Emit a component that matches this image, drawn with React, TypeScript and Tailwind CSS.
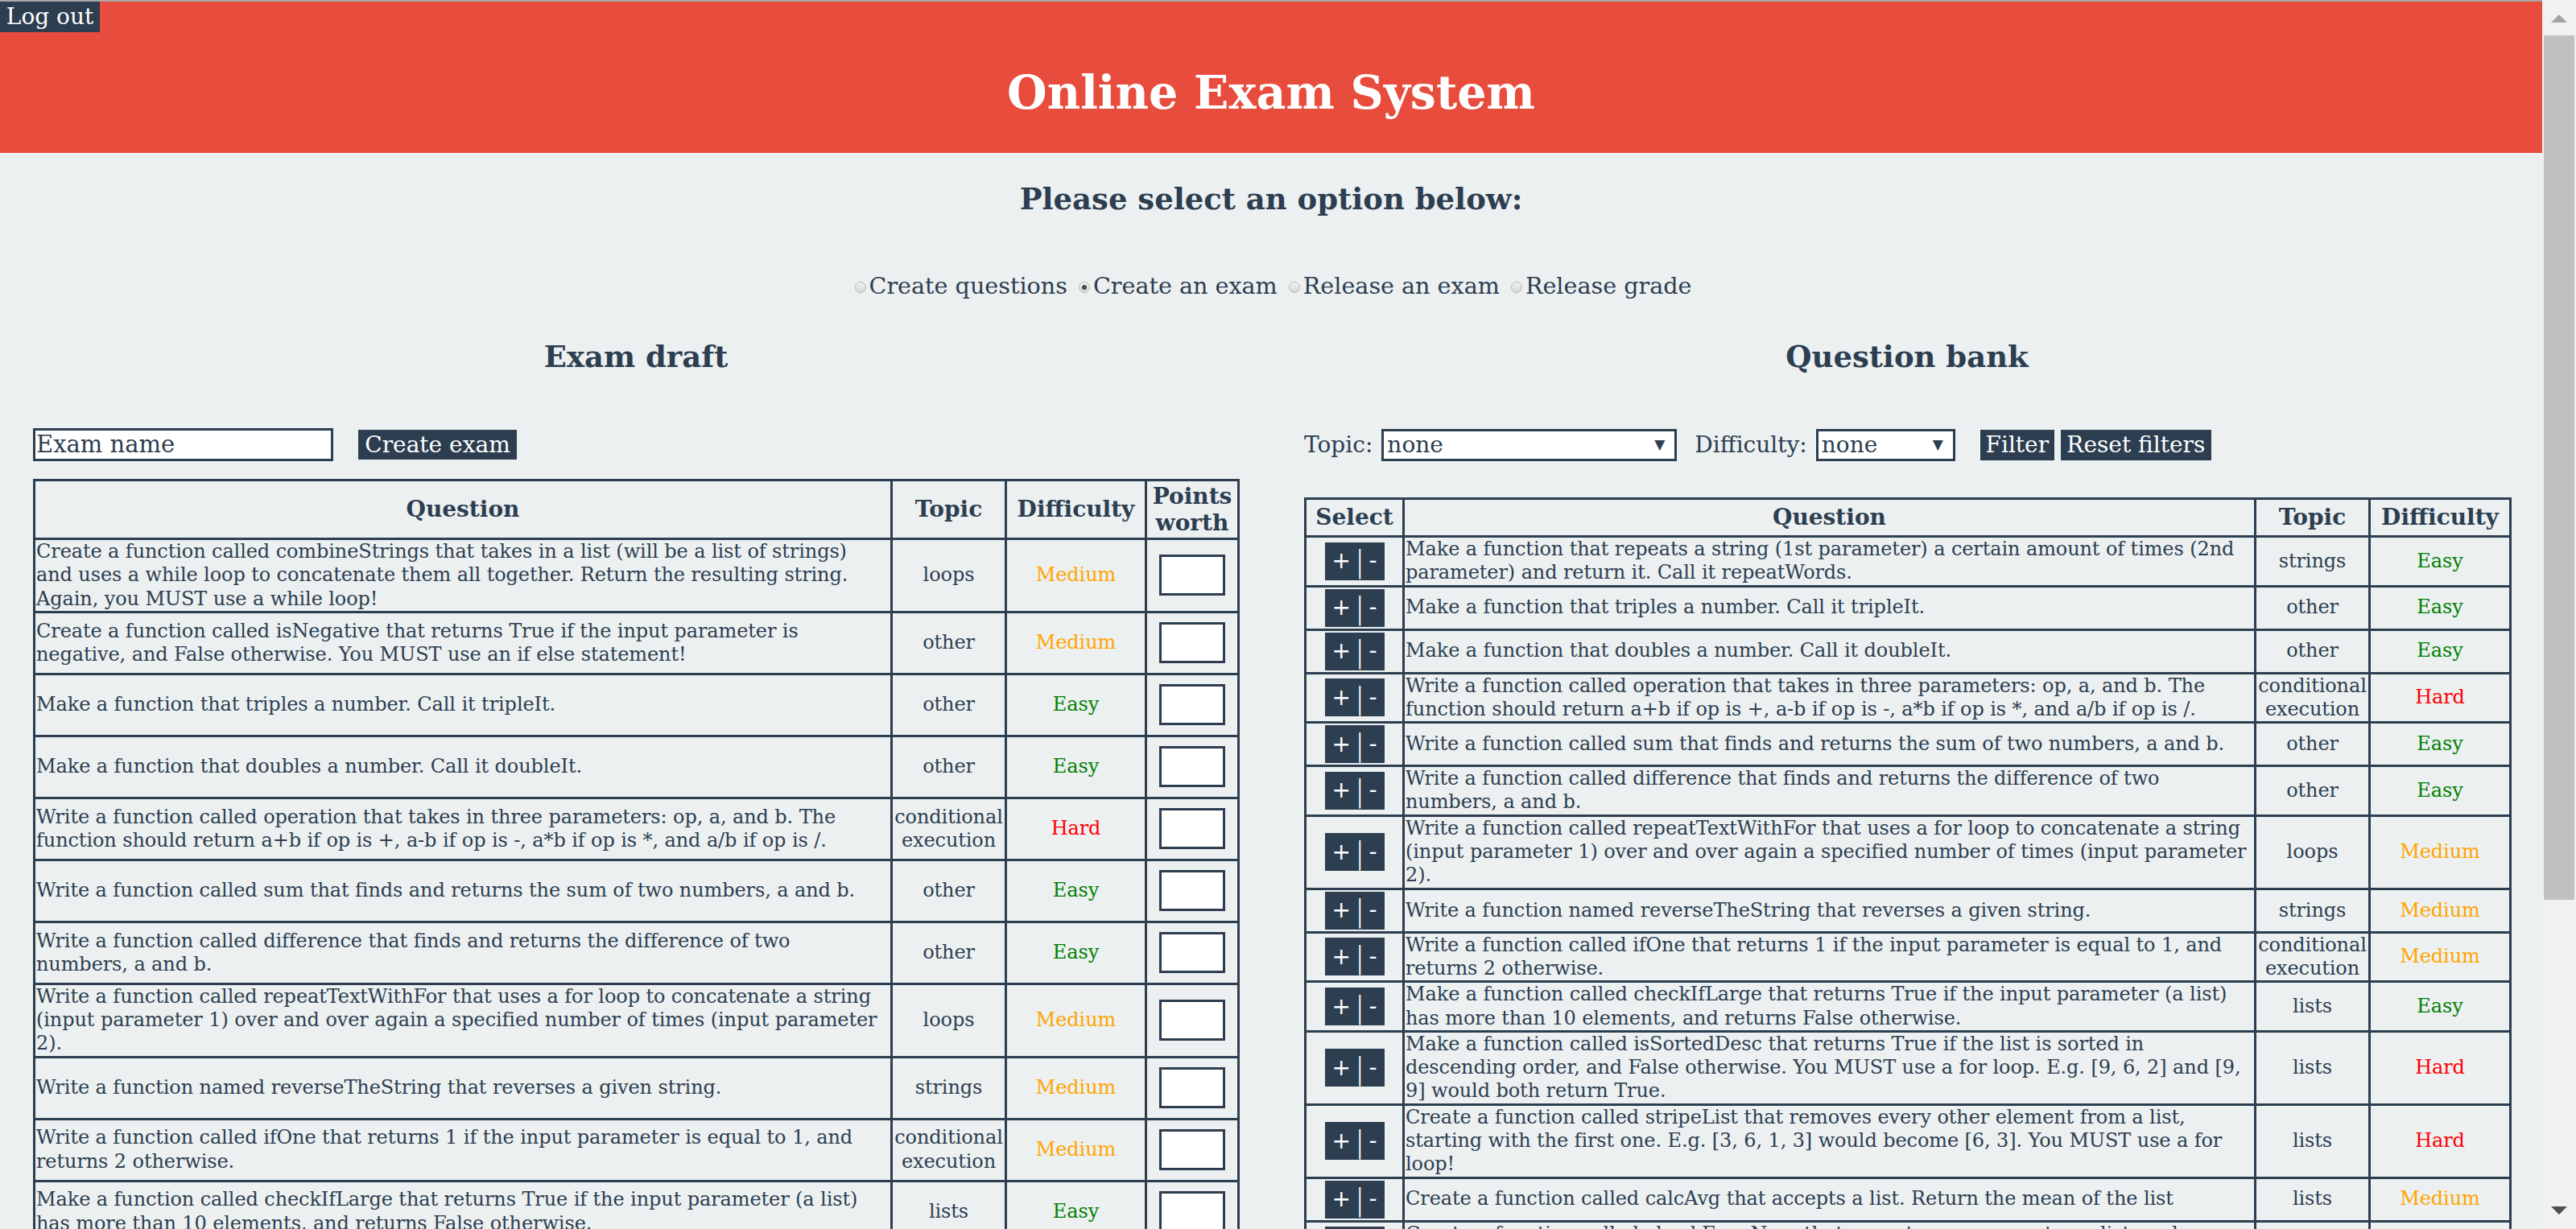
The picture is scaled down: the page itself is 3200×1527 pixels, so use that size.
import React from "react";

type Row = { q: string; t: string; d: "Easy" | "Medium" | "Hard" };

const draft: Row[] = [
  { q: "Create a function called combineStrings that takes in a list (will be a list of strings) and uses a while loop to concatenate them all together. Return the resulting string. Again, you MUST use a while loop!", t: "loops", d: "Medium" },
  { q: "Create a function called isNegative that returns True if the input parameter is negative, and False otherwise. You MUST use an if else statement!", t: "other", d: "Medium" },
  { q: "Make a function that triples a number. Call it tripleIt.", t: "other", d: "Easy" },
  { q: "Make a function that doubles a number. Call it doubleIt.", t: "other", d: "Easy" },
  { q: "Write a function called operation that takes in three parameters: op, a, and b. The function should return a+b if op is +, a-b if op is -, a*b if op is *, and a/b if op is /.", t: "conditional execution", d: "Hard" },
  { q: "Write a function called sum that finds and returns the sum of two numbers, a and b.", t: "other", d: "Easy" },
  { q: "Write a function called difference that finds and returns the difference of two numbers, a and b.", t: "other", d: "Easy" },
  { q: "Write a function called repeatTextWithFor that uses a for loop to concatenate a string (input parameter 1) over and over again a specified number of times (input parameter 2).", t: "loops", d: "Medium" },
  { q: "Write a function named reverseTheString that reverses a given string.", t: "strings", d: "Medium" },
  { q: "Write a function called ifOne that returns 1 if the input parameter is equal to 1, and returns 2 otherwise.", t: "conditional execution", d: "Medium" },
  { q: "Make a function called checkIfLarge that returns True if the input parameter (a list) has more than 10 elements, and returns False otherwise.", t: "lists", d: "Easy" },
  { q: "Make a function called isSortedDesc that returns True if the list is sorted in descending order, and False otherwise. You MUST use a for loop. E.g. [9, 6, 2] and [9, 9] would both return True.", t: "lists", d: "Hard" },
];

const bank: Row[] = [
  { q: "Make a function that repeats a string (1st parameter) a certain amount of times (2nd parameter) and return it. Call it repeatWords.", t: "strings", d: "Easy" },
  { q: "Make a function that triples a number. Call it tripleIt.", t: "other", d: "Easy" },
  { q: "Make a function that doubles a number. Call it doubleIt.", t: "other", d: "Easy" },
  { q: "Write a function called operation that takes in three parameters: op, a, and b. The function should return a+b if op is +, a-b if op is -, a*b if op is *, and a/b if op is /.", t: "conditional execution", d: "Hard" },
  { q: "Write a function called sum that finds and returns the sum of two numbers, a and b.", t: "other", d: "Easy" },
  { q: "Write a function called difference that finds and returns the difference of two numbers, a and b.", t: "other", d: "Easy" },
  { q: "Write a function called repeatTextWithFor that uses a for loop to concatenate a string (input parameter 1) over and over again a specified number of times (input parameter 2).", t: "loops", d: "Medium" },
  { q: "Write a function named reverseTheString that reverses a given string.", t: "strings", d: "Medium" },
  { q: "Write a function called ifOne that returns 1 if the input parameter is equal to 1, and returns 2 otherwise.", t: "conditional execution", d: "Medium" },
  { q: "Make a function called checkIfLarge that returns True if the input parameter (a list) has more than 10 elements, and returns False otherwise.", t: "lists", d: "Easy" },
  { q: "Make a function called isSortedDesc that returns True if the list is sorted in descending order, and False otherwise. You MUST use a for loop. E.g. [9, 6, 2] and [9, 9] would both return True.", t: "lists", d: "Hard" },
  { q: "Create a function called stripeList that removes every other element from a list, starting with the first one. E.g. [3, 6, 1, 3] would become [6, 3]. You MUST use a for loop!", t: "lists", d: "Hard" },
  { q: "Create a function called calcAvg that accepts a list. Return the mean of the list", t: "lists", d: "Medium" },
  { q: "Create a function called checkEvenNum that accepts one parameter, a list, and returns a list which only contains the even numbers.", t: "lists", d: "Easy" },
];

function Diff({ d }: { d: Row["d"] }) {
  const cls =
    d === "Easy" ? "text-[#008000]" : d === "Medium" ? "text-[#ffa500]" : "text-[#ff0000]";
  return <span className={cls}>{d}</span>;
}

function Radio({ checked }: { checked?: boolean }) {
  return (
    <span className="inline-flex items-center justify-center w-[14px] h-[14px] rounded-full border border-[#b9b9b9] bg-gradient-to-b from-[#f4f4f4] to-[#d6d6d6] ml-[5px] mr-[4px] translate-y-[2px]">
      {checked && <span className="w-[6px] h-[6px] rounded-full bg-[#4a4a4a]" />}
    </span>
  );
}

function FakeSelect({ w }: { w: string }) {
  return (
    <div className={`${w} h-[40px] border-[3px] border-[#2c3e50] bg-white flex items-center justify-between pl-[4px] pr-[12px] text-[28px] text-[#2c3e50]`}>
      <span className="leading-none">none</span>
      <span className="text-[17px] leading-none">▼</span>
    </div>
  );
}

const cellB = "border-[3px] border-[#2c3e50]";

export default function App() {
  return (
    <div className="w-[3200px] h-[1527px] overflow-hidden flex bg-[#ecf0f1] font-['DejaVu_Serif',serif] text-[#2c3e50]">
      <div className="w-[3158px] h-[1527px] overflow-hidden relative">
        <div className="h-[2px] bg-[#a8a8a8]" />
        <button className="absolute left-0 top-[2px] w-[124px] h-[38px] bg-[#2c3e50] text-white text-[28px] leading-none">
          Log out
        </button>
        <header className="h-[188px] pt-[37px] bg-[#e74c3c] flex items-center justify-center">
          <h1 className="text-[57px] font-bold text-white leading-none">Online Exam System</h1>
        </header>

        <div className="h-[114px] flex items-center justify-center">
          <h2 className="text-[37px] font-bold leading-none">Please select an option below:</h2>
        </div>

        <div className="h-[102px] flex items-center justify-center text-[28.6px]">
          <label className="flex items-center"><Radio />Create questions&nbsp;</label>
          <label className="flex items-center"><Radio checked />Create an exam&nbsp;</label>
          <label className="flex items-center"><Radio />Release an exam&nbsp;</label>
          <label className="flex items-center"><Radio />Release grade</label>
        </div>

        <div className="flex">
          {/* Exam draft */}
          <section className="w-[1580px] pl-[41px]">
            <div className="h-[74px] flex items-center justify-center pr-[41px]">
              <h2 className="text-[37px] font-bold leading-none">Exam draft</h2>
            </div>
            <div className="mt-[52px] flex items-center h-[41px]">
              <input
                placeholder="Exam name"
                className="w-[373px] h-[41px] border-[3px] border-[#2c3e50] bg-white text-[29px] px-[1px] text-[#2c3e50] placeholder:text-[#2c3e50] outline-none"
              />
              <button className="ml-[31px] w-[197px] h-[37px] bg-[#2c3e50] text-white text-[28px] leading-none">
                Create exam
              </button>
            </div>
            <table className="mt-[22px] w-[1496px] table-fixed border-collapse border-[3px] border-[#2c3e50]">
              <colgroup>
                <col className="w-[1065px]" />
                <col className="w-[142px]" />
                <col className="w-[174px]" />
                <col className="w-[115px]" />
              </colgroup>
              <thead>
                <tr className="text-[28px] font-bold">
                  <th className={`${cellB} py-[2px]`}>Question</th>
                  <th className={`${cellB} py-[2px]`}>Topic</th>
                  <th className={`${cellB} py-[2px]`}>Difficulty</th>
                  <th className={`${cellB} py-[2px] px-0 leading-[33px]`}>Points worth</th>
                </tr>
              </thead>
              <tbody className="text-[24px] leading-[29.3px] tracking-[-0.1px]">
                {draft.map((r, i) => (
                  <tr key={i}>
                    <td className={`${cellB} py-0 pl-[1px] pr-[5px] text-left`}>{r.q}</td>
                    <td className={`${cellB} py-0 px-0 text-center`}>{r.t}</td>
                    <td className={`${cellB} py-0 px-0 text-center`}><Diff d={r.d} /></td>
                    <td className={`${cellB} py-0 px-0`}>
                      <div className="flex justify-center">
                        <input className="w-[82px] h-[51px] my-[11.5px] border-[3px] border-[#2c3e50] bg-white outline-none" />
                      </div>
                    </td>
                  </tr>
                ))}
              </tbody>
            </table>
          </section>

          {/* Question bank */}
          <section className="w-[1578px] pl-[40px]">
            <div className="h-[74px] flex items-center justify-center pr-[40px]">
              <h2 className="text-[37px] font-bold leading-none">Question bank</h2>
            </div>
            <div className="mt-[52px] flex items-center h-[41px] text-[28px]">
              <span className="mr-[11px]">Topic:</span>
              <FakeSelect w="w-[367px]" />
              <span className="ml-[22px] mr-[11px]">Difficulty:</span>
              <FakeSelect w="w-[173px]" />
              <button className="ml-[31px] w-[92px] h-[38px] bg-[#2c3e50] text-white leading-none">Filter</button>
              <button className="ml-[8px] w-[187px] h-[38px] bg-[#2c3e50] text-white leading-none">Reset filters</button>
            </div>
            <table className="mt-[45px] w-[1497px] table-fixed border-collapse border-[3px] border-[#2c3e50]">
              <colgroup>
                <col className="w-[122px]" />
                <col className="w-[1058px]" />
                <col className="w-[142px]" />
                <col className="w-[175px]" />
              </colgroup>
              <thead>
                <tr className="text-[28px] font-bold">
                  <th className={`${cellB} py-[1px] px-0`}>Select</th>
                  <th className={`${cellB} py-[1px]`}>Question</th>
                  <th className={`${cellB} py-[1px] px-0`}>Topic</th>
                  <th className={`${cellB} py-[1px] px-0`}>Difficulty</th>
                </tr>
              </thead>
              <tbody className="text-[24px] leading-[29.3px] tracking-[-0.1px]">
                {bank.map((r, i) => (
                  <tr key={i}>
                    <td className={`${cellB} py-0 px-0`}>
                      <div className="flex justify-center">
                        <button className="my-[2px] w-[74px] h-[47px] bg-[#2c3e50] text-white font-['DejaVu_Sans',sans-serif] flex items-center justify-center gap-[5px]">
                          <span className="text-[28px] leading-none">+</span>
                          <span className="text-[38px] leading-none font-light">|</span>
                          <span className="text-[28px] leading-none">-</span>
                        </button>
                      </div>
                    </td>
                    <td className={`${cellB} py-0 pl-[1px] pr-[2px] text-left`}>{r.q}</td>
                    <td className={`${cellB} py-0 px-0 text-center`}>{r.t}</td>
                    <td className={`${cellB} py-0 px-0 text-center`}><Diff d={r.d} /></td>
                  </tr>
                ))}
              </tbody>
            </table>
          </section>
        </div>
      </div>

      {/* scrollbar */}
      <div className="w-[42px] h-[1527px] bg-[#f1f1f1] flex flex-col items-center">
        <div className="h-[44px] w-full flex items-center justify-center">
          <svg width="20" height="12" viewBox="0 0 20 12"><path d="M0 12 L10 2 L20 12 Z" fill="#a3a3a3" /></svg>
        </div>
        <div className="w-[38px] h-[1074px] bg-[#c1c1c1]" />
        <div className="flex-1" />
        <div className="h-[44px] w-full flex items-center justify-center">
          <svg width="20" height="12" viewBox="0 0 20 12"><path d="M0 0 L20 0 L10 10 Z" fill="#505050" /></svg>
        </div>
      </div>
    </div>
  );
}
